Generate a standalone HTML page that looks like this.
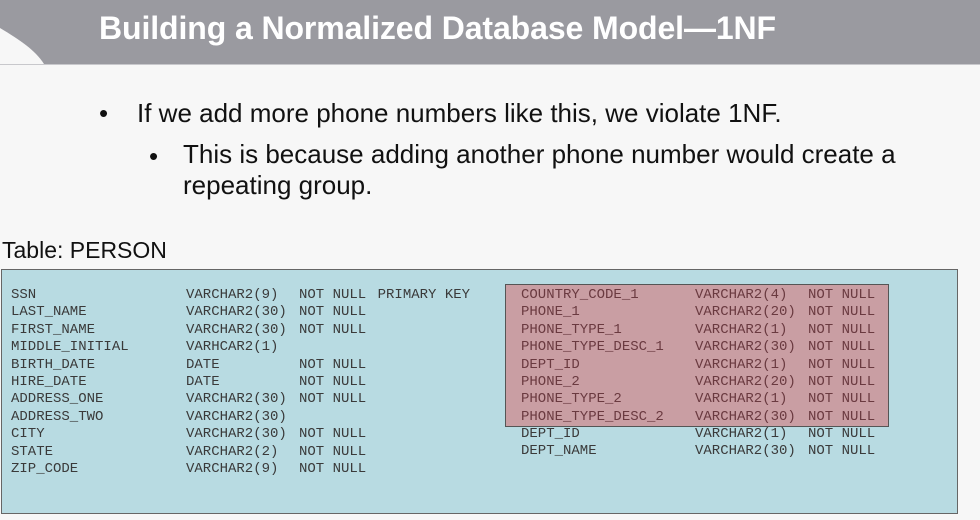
<!DOCTYPE html>
<html><head><style>
*{margin:0;padding:0}
body{width:980px;height:520px;background:#f7f7f7;position:relative;overflow:hidden;font-family:"Liberation Sans",Arial,sans-serif}
.hdr{position:absolute;left:0;top:0;width:980px;height:64px;background:#9a9aa0;border-bottom:1px solid #c8c8cc}
.title{position:absolute;left:99px;top:10px;color:#fff;font-weight:bold;font-size:32px;letter-spacing:-0.1px;white-space:nowrap}
.t{position:absolute;white-space:nowrap;color:#111}
.tbl{position:absolute;left:1px;top:269px;width:955px;height:243px;background:#b8dbe2;border:1px solid #666}
.pink{position:absolute;left:505px;top:284px;width:382px;height:141px;background:#c99ea3;border:1px solid #555}
pre{position:absolute;font-family:"Liberation Mono","Courier New",monospace;font-size:14px;line-height:17.4px;color:#3a3a3a}
.p{color:#6a3a40}
</style></head><body>
<div class="hdr"></div>
<svg style="position:absolute;left:0;top:0" width="90" height="66"><path d="M0 28 C20 40 35 50 44 64 L0 64 Z" fill="#f7f7f7"/></svg>
<div class="title">Building a Normalized Database Model—1NF</div>
<div class="t" style="left:99px;top:98px;font-size:26px">•</div>
<div class="t" style="left:137px;top:98px;font-size:26px">If we add more phone numbers like this, we violate 1NF.</div>
<div class="t" style="left:149px;top:141px;font-size:26px">•</div>
<div class="t" style="left:183px;top:139px;font-size:26px;line-height:31px">This is because adding another phone number would create a<br>repeating group.</div>
<div class="t" style="left:2px;top:237px;font-size:23px">Table: PERSON</div>
<div class="tbl"></div>
<div class="pink"></div>
<pre style="left:11px;top:287px">SSN
LAST_NAME
FIRST_NAME
MIDDLE_INITIAL
BIRTH_DATE
HIRE_DATE
ADDRESS_ONE
ADDRESS_TWO
CITY
STATE
ZIP_CODE</pre>
<pre style="left:186px;top:287px">VARCHAR2(9)
VARCHAR2(30)
VARCHAR2(30)
VARHCAR2(1)
DATE
DATE
VARCHAR2(30)
VARCHAR2(30)
VARCHAR2(30)
VARCHAR2(2)
VARCHAR2(9)</pre>
<pre style="left:299px;top:287px">NOT NULL <span style="position:relative;left:3px">PRIMARY KEY</span>
NOT NULL
NOT NULL

NOT NULL
NOT NULL
NOT NULL

NOT NULL
NOT NULL
NOT NULL</pre>
<pre class="p" style="left:521px;top:287px">COUNTRY_CODE_1
PHONE_1
PHONE_TYPE_1
PHONE_TYPE_DESC_1
DEPT_ID
PHONE_2
PHONE_TYPE_2
PHONE_TYPE_DESC_2</pre>
<pre class="p" style="left:695px;top:287px">VARCHAR2(4)
VARCHAR2(20)
VARCHAR2(1)
VARCHAR2(30)
VARCHAR2(1)
VARCHAR2(20)
VARCHAR2(1)
VARCHAR2(30)</pre>
<pre class="p" style="left:808px;top:287px">NOT NULL
NOT NULL
NOT NULL
NOT NULL
NOT NULL
NOT NULL
NOT NULL
NOT NULL</pre>
<pre style="left:521px;top:426px">DEPT_ID
DEPT_NAME</pre>
<pre style="left:695px;top:426px">VARCHAR2(1)
VARCHAR2(30)</pre>
<pre style="left:808px;top:426px">NOT NULL
NOT NULL</pre>
</body></html>
